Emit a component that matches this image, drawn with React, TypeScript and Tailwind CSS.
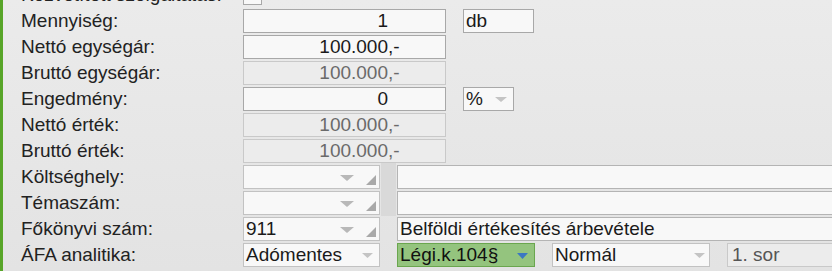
import type { ReactNode } from "react";

const FONT = { fontFamily: '"Liberation Sans", Arial, sans-serif' };

function Caret({ className = "fill-[#b8b8b8]", w = 14, h = 6 }: { className?: string; w?: number; h?: number }) {
  return (
    <svg width={w} height={h} viewBox={`0 0 ${w} ${h}`} className={className}>
      <polygon points={`0,0 ${w},0 ${w / 2},${h}`} />
    </svg>
  );
}

function Corner() {
  return (
    <svg width="10" height="10" viewBox="0 0 10 10" className="fill-[#a9a9a9]">
      <polygon points="10,0 10,10 0,10" />
    </svg>
  );
}

function Amount({ num, suffix, disabled }: { num: string; suffix?: string; disabled?: boolean }) {
  return (
    <div
      className={
        "flex h-[24px] w-[203px] items-center border " +
        (disabled ? "border-[#c9c9c9] bg-[#ececec] text-[#6a6a6a]" : "border-[#a8a8a8] bg-[#f8f8f8] text-[#1a1a1a]")
      }
    >
      <span className="flex-1 text-right">{num}</span>
      <span className="w-[57px] text-left">{suffix}</span>
    </div>
  );
}

function Row({ label, children }: { label: string; children?: ReactNode }) {
  return (
    <div className="flex h-[26px] items-center">
      <div className="w-[222px] shrink-0 whitespace-nowrap text-[#222]">{label}</div>
      <div className="flex items-center gap-[17px]">{children}</div>
    </div>
  );
}

function CodeSelect({ value }: { value?: string }) {
  return (
    <div className="flex h-[24px] w-[137px] items-center border border-[#c2c2c2] bg-[#f8f8f8] pl-[2px] text-[#1a1a1a]">
      <span className="flex-1">{value}</span>
      <span className="mr-[12px] mt-[1px]">
        <Caret />
      </span>
      <span className="mr-[3px] mt-[6px]">
        <Corner />
      </span>
    </div>
  );
}

function TextBox({ value }: { value?: string }) {
  return (
    <div className="flex h-[24px] w-[460px] items-center whitespace-nowrap border border-[#b4b4b4] bg-[#f8f8f8] pl-[2px] text-[#1a1a1a]">
      {value}
    </div>
  );
}

export default function App() {
  return (
    <div
      className="flex h-[271px] w-[832px] overflow-hidden bg-gradient-to-b from-[#ebebeb] to-[#e3e3e3] text-[19px] leading-[22px]"
      style={FONT}
    >
      <div className="w-[3px] shrink-0 bg-[#58a529]" />
      <div className="relative mt-[-18px] flex flex-1 flex-col pl-[18px]">
        <Row label="Közvetített szolgáltatás:">
          <div className="h-[19px] w-[19px] border border-[#a8a8a8] bg-[#f8f8f8]" />
        </Row>
        <Row label="Mennyiség:">
          <Amount num="1" />
          <div className="flex h-[24px] w-[71px] items-center border border-[#a8a8a8] bg-[#f8f8f8] pl-[2px] text-[#1a1a1a]">
            db
          </div>
        </Row>
        <Row label="Nettó egységár:">
          <Amount num="100.000" suffix=",-" />
        </Row>
        <Row label="Bruttó egységár:">
          <Amount num="100.000" suffix=",-" disabled />
        </Row>
        <Row label="Engedmény:">
          <Amount num="0" />
          <div className="flex h-[24px] w-[51px] items-center border border-[#a8a8a8] bg-[#f8f8f8] pl-[2px] text-[#1a1a1a]">
            <span className="flex-1">%</span>
            <span className="mr-[6px] mt-[1px]">
              <Caret w={12} h={5} className="fill-[#c4c4c4]" />
            </span>
          </div>
        </Row>
        <Row label="Nettó érték:">
          <Amount num="100.000" suffix=",-" disabled />
        </Row>
        <Row label="Bruttó érték:">
          <Amount num="100.000" suffix=",-" disabled />
        </Row>
        <Row label="Költséghely:">
          <CodeSelect />
          <TextBox />
        </Row>
        <Row label="Témaszám:">
          <CodeSelect />
          <TextBox />
        </Row>
        <Row label="Főkönyvi szám:">
          <CodeSelect value="911" />
          <TextBox value="Belföldi értékesítés árbevétele" />
        </Row>
        <Row label="ÁFA analitika:">
          <div className="flex h-[24px] w-[137px] items-center border border-[#c2c2c2] bg-[#f8f8f8] pl-[2px] text-[#1a1a1a]">
            <span className="flex-1">Adómentes</span>
            <span className="mr-[6px] mt-[1px]">
              <Caret w={11} h={5} className="fill-[#c4c4c4]" />
            </span>
          </div>
          <div className="flex h-[24px] w-[138px] items-center border border-[#6aa64e] bg-[#94c47e] pl-[2px] text-[#111]">
            <span className="flex-1">Légi.k.104§</span>
            <span className="mr-[6px] mt-[1px]">
              <Caret w={11} h={6} className="fill-[#3b78c2]" />
            </span>
          </div>
          <div className="flex h-[24px] w-[158px] items-center border border-[#c2c2c2] bg-[#f8f8f8] pl-[2px] text-[#1a1a1a]">
            <span className="flex-1">Normál</span>
            <span className="mr-[4px] mt-[1px]">
              <Caret w={11} h={5} className="fill-[#c4c4c4]" />
            </span>
          </div>
          <div className="flex h-[24px] w-[120px] items-center border border-[#c9c9c9] bg-[#ececec] pl-[4px] text-[#555]">
            1. sor
          </div>
        </Row>
        <div className="absolute left-[378px] top-[181px] h-[53px] w-[15px] bg-[#d9d9d9]" />
      </div>
    </div>
  );
}
